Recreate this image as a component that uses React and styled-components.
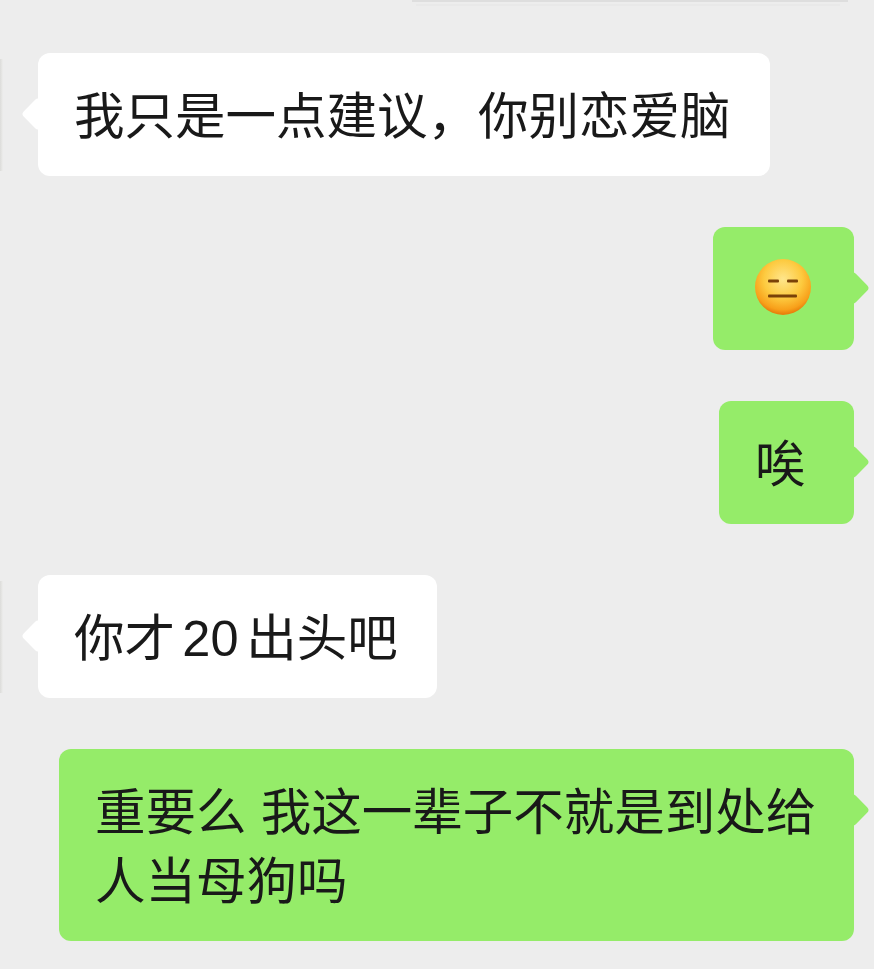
import React from "react";
import styled, { createGlobalStyle } from "styled-components";

const GlobalStyle = createGlobalStyle`
  html, body {
    margin: 0;
    padding: 0;
    background: #ededed;
  }
`;

const Page = styled.div`
  width: 874px;
  height: 969px;
  overflow: hidden;
  background: #ededed;
  font-family: "Noto Sans CJK SC", sans-serif;
`;

const TopEdge = styled.div`
  position: relative;
  width: 436px;
  height: 2px;
  margin-left: 412px;
  background: #dedede;

  &::after {
    content: "";
    position: absolute;
    top: 4px;
    left: 4px;
    right: 8px;
    height: 2px;
    background: #e9e9e9;
  }
`;

const Thread = styled.div`
  display: flex;
  flex-direction: column;
  gap: 51px;
  padding: 51px 20px 0 0;
`;

const Row = styled.div`
  display: flex;
  align-items: center;
  justify-content: ${({ $mine }) => ($mine ? "flex-end" : "flex-start")};
`;

const AvatarEdge = styled.div`
  width: 3px;
  height: 112px;
  margin-right: 35px;
  flex-shrink: 0;
  background: linear-gradient(to right, #dcdcda, #e6e6e4 60%, #ededed);
`;

const Bubble = styled.div`
  position: relative;
  box-sizing: border-box;
  max-width: 795px;
  min-width: ${({ $mine }) => ($mine ? "135px" : "0")};
  min-height: 123px;
  padding: 25px 39px 29px 36px;
  border-radius: 12px;
  background: ${({ $mine }) => ($mine ? "#95ec69" : "#ffffff")};
  color: #191919;
  font-size: 50.5px;
  line-height: 69px;
  white-space: nowrap;
  word-spacing: ${({ $spaced }) => ($spaced ? "3px" : "0")};

  &::after {
    content: "";
    position: absolute;
    top: 48.5px;
    ${({ $mine }) => ($mine ? "right: -11px;" : "left: -12px;")}
    width: 24px;
    height: 24px;
    border-radius: 4px;
    transform: rotate(45deg);
    background: inherit;
  }
`;

const Latin = styled.span`
  margin: 0 -3.5px 0 -4px;
  font-family: "Liberation Sans", sans-serif;
  line-height: 1;
`;

const EmojiIcon = styled.svg`
  display: block;
  width: 60px;
  height: 60px;
  margin: 5px 2px 4px 4px;
`;

const Emoji = () => (
  <EmojiIcon viewBox="0 0 60 60">
    <defs>
      <radialGradient id="face" cx="50%" cy="36%" r="62%">
        <stop offset="0%" stopColor="#ffe68c" />
        <stop offset="55%" stopColor="#fdca3f" />
        <stop offset="88%" stopColor="#f8a01a" />
        <stop offset="100%" stopColor="#e8800c" />
      </radialGradient>
    </defs>
    <circle cx="30" cy="30" r="28" fill="url(#face)" />
    <rect x="15" y="22.5" width="11" height="3" rx="1" fill="#7a4208" />
    <rect x="34" y="22.5" width="11" height="3" rx="1" fill="#7a4208" />
    <rect x="15" y="37.5" width="29" height="3" rx="1" fill="#7a4208" />
  </EmojiIcon>
);

const App = () => (
  <Page>
    <GlobalStyle />
    <TopEdge />
    <Thread>
      <Row>
        <AvatarEdge />
        <Bubble>我只是一点建议，你别恋爱脑</Bubble>
      </Row>
      <Row $mine>
        <Bubble $mine>
          <Emoji />
        </Bubble>
      </Row>
      <Row $mine>
        <Bubble $mine>唉</Bubble>
      </Row>
      <Row>
        <AvatarEdge />
        <Bubble>
          你才 <Latin>20</Latin> 出头吧
        </Bubble>
      </Row>
      <Row $mine>
        <Bubble $mine $spaced>
          重要么 我这一辈子不就是到处给
          <br />
          人当母狗吗
        </Bubble>
      </Row>
    </Thread>
  </Page>
);

export default App;
